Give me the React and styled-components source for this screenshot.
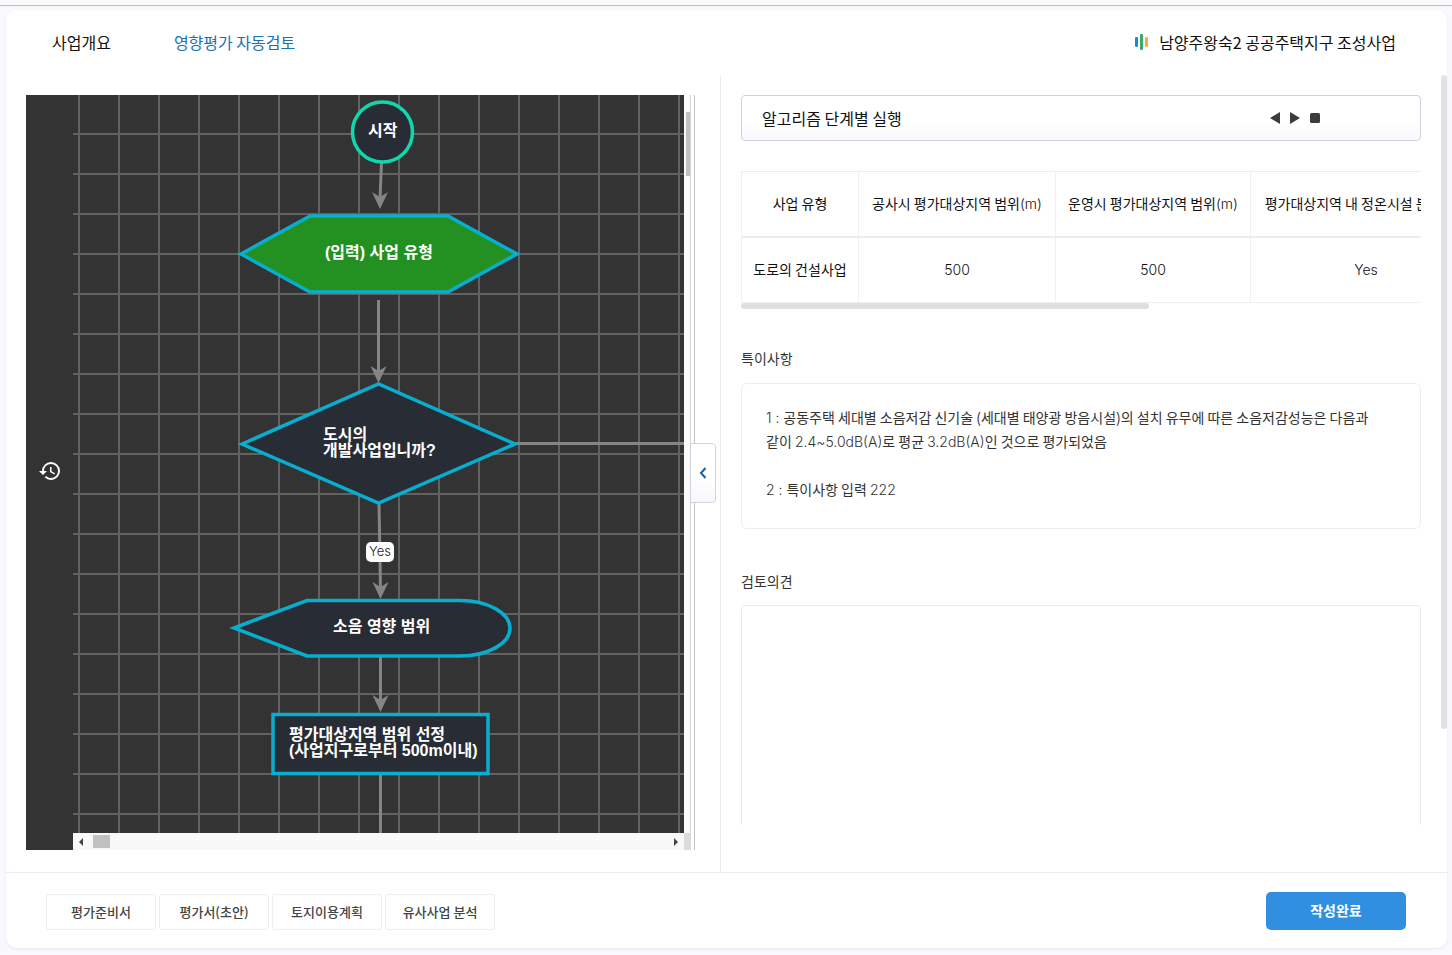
import styled, { createGlobalStyle } from 'styled-components';
import { MdHistory } from 'react-icons/md';

const GlobalStyle = createGlobalStyle`
  * {
    box-sizing: border-box;
  }

  body {
    margin: 0;
    background: #f9f9fd;
    color: #111;
    font-family: "Noto Sans CJK KR", "Noto Sans", sans-serif;
    font-size: 16px;
  }

  button {
    padding: 0;
    border: none;
    background: none;
    color: inherit;
    font-family: inherit;
    cursor: pointer;
  }
`;

const Page = styled.div`
  display: flex;
  flex-direction: column;
  height: 100vh;
  padding-bottom: 7px;
`;

const TopLine = styled.div`
  height: 6px;
  flex: none;
  background: #fafafa;
  border-bottom: 1px solid #bdbdbd;
`;

const Card = styled.div`
  display: flex;
  flex-direction: column;
  flex: 1;
  min-height: 0;
  margin: 4px 5px 0 6px;
  background: #fff;
  border-radius: 10px;
  box-shadow: 0 1px 3px #e4e4ee;
`;

const Header = styled.header`
  display: flex;
  align-items: center;
  justify-content: space-between;
  flex: none;
  height: 65px;
  padding: 0 51px 2px 46px;
`;

const Tabs = styled.nav`
  display: flex;
  gap: 63px;
`;

const Tab = styled.a`
  color: ${({ $active }) => ($active ? '#1b6fb3' : '#111')};
  text-decoration: none;
`;

const Project = styled.div`
  display: flex;
  align-items: center;
  gap: 9px;
`;

const Main = styled.main`
  display: grid;
  grid-template-columns: 715fr 726fr;
  flex: 1;
  min-height: 0;
`;

// 왼쪽 : 알고리즘 순서도
const FlowPanel = styled.section`
  position: relative;
  display: flex;
  min-width: 0;
  padding: 20px 25px 22px 20px;
  border-right: 1px solid #ebebf0;
`;

const HistoryBar = styled.div`
  display: flex;
  align-items: center;
  justify-content: center;
  flex: none;
  width: 47px;
  padding-bottom: 3px;
  background: #333;
  color: #fff;

  button {
    display: flex;
  }
`;

const Viewport = styled.div`
  display: grid;
  grid-template-columns: 1fr 11px;
  grid-template-rows: 1fr 17px;
  flex: 1;
  min-width: 0;
`;

const Canvas = styled.div`
  overflow: hidden;
  min-width: 0;
  min-height: 0;
  background: #333;

  svg {
    display: block;
    width: 100%;
    height: 100%;
  }
`;

const NodeText = styled.text`
  fill: #fff;
  font-family: "Liberation Sans", "Noto Sans CJK KR", sans-serif;
  font-size: 16px;
  font-weight: 700;
`;

const EdgeText = styled.text`
  fill: #222;
  font-family: Inter, sans-serif;
  font-size: 13px;
  font-weight: 300;
  text-anchor: middle;
`;

const VerticalTrack = styled.div`
  padding: 17px 4px 0 2px;
  border-right: 1px solid #c4c4c4;
  background: linear-gradient(to right, #fafafa 6px, #d4d4d8 6px, #d4d4d8 7px, #fff 7px);
`;

const VerticalThumb = styled.div`
  height: 64px;
  background: #c1c1c1;
`;

const HorizontalTrack = styled.div`
  display: flex;
  align-items: center;
  gap: 9px;
  padding: 0 6px;
  background: #f8f8f8;
`;

const HorizontalThumb = styled.div`
  width: 17px;
  height: 13px;
  margin-right: auto;
  background: #c1c1c1;
`;

const TrackCorner = styled.div`
  border-right: 1px solid #c4c4c4;
  background: linear-gradient(to right, #dcdcdc 7px, #fff 7px);
`;

const FoldButton = styled.button`
  position: absolute;
  top: 368px;
  right: 4px;
  display: flex;
  align-items: center;
  justify-content: center;
  width: 26px;
  height: 60px;
  border: 1px solid #d3d3e0;
  border-radius: 0 4px 4px 0;
  background: linear-gradient(#fff 60%, #f7f7fd);
`;

// 오른쪽 : 실행 결과
const ResultPanel = styled.section`
  display: grid;
  grid-template-columns: 1fr 6px;
  column-gap: 20px;
  min-width: 0;
  min-height: 0;
  padding-left: 20px;
`;

const ResultBody = styled.div`
  overflow: hidden;
  min-width: 0;
  margin: 20px 0 47px;
`;

const PanelThumb = styled.div`
  height: 82%;
  border-radius: 3px;
  background: #e1e1e8;
`;

const Runner = styled.div`
  display: flex;
  align-items: center;
  justify-content: space-between;
  height: 46px;
  padding: 0 99px 0 20px;
  border: 1px solid #d0d0de;
  border-radius: 4px;
  background: linear-gradient(#fff 60%, #f8f8fe);
  line-height: 22px;
`;

const RunnerButtons = styled.div`
  display: flex;
  gap: 8px;

  button {
    display: flex;
  }
`;

const TableWrap = styled.div`
  overflow: hidden;
  margin-top: 30px;
  border-left: 1px solid #f0f0f0;
`;

const Table = styled.table`
  width: 740px;
  border-collapse: separate;
  border-spacing: 0;
  table-layout: fixed;
  font-size: 14px;
  line-height: 20px;
  text-align: center;
  white-space: nowrap;

  th,
  td {
    height: 65px;
    padding: 0 0 2px;
    border-right: 1px solid #f0f0f0;
    border-bottom: 1px solid #f0f0f0;
    font-weight: 400;
  }

  th {
    height: 67px;
    border-top: 1px solid #ececec;
    border-bottom: 2px solid #ececec;
  }
`;

// 영문, 숫자는 얇은 글꼴
const Thin = styled.span`
  font-family: Inter, sans-serif;
  font-weight: 300;
  line-height: 1;
`;

const TableThumb = styled.div`
  width: 60%;
  height: 6px;
  border-radius: 3px;
  background: #dfdfdf;
`;

const Label = styled.label`
  display: block;
  margin-top: ${({ $top }) => $top}px;
  color: #333;
  font-size: 14px;
  line-height: 24px;
`;

const Remarks = styled.div`
  margin-top: 13px;
  padding: 21px 32px 27px 24px;
  border: 1px solid #eeeef2;
  border-radius: 6px;
  color: #333;
  font-size: 14px;
  line-height: 24px;
  word-break: keep-all;

  p {
    margin: 0;
  }

  p + p {
    margin-top: 24px;
  }
`;

const Opinion = styled.textarea`
  display: block;
  width: 100%;
  height: 300px;
  margin-top: 12px;
  padding: 20px 24px;
  border: 1px solid #ebebef;
  border-radius: 4px;
  outline: none;
  resize: none;
  font: inherit;
`;

const Footer = styled.footer`
  display: flex;
  align-items: center;
  justify-content: space-between;
  flex: none;
  height: 76px;
  padding: 0 41px 0 40px;
  border-top: 1px solid #ebebf0;
`;

const DocButtons = styled.div`
  display: flex;
  gap: 3px;
  padding-top: 2px;
`;

const DocButton = styled.button`
  width: 110px;
  height: 36px;
  border: 1px solid #eeeef0;
  border-radius: 3px;
  color: #444;
  font-size: 13px;
  font-weight: 500;
`;

const DoneButton = styled.button`
  width: 140px;
  height: 38px;
  padding-bottom: 2px;
  border-radius: 5px;
  background: #318fe1;
  color: #fff;
  font-size: 14px;
  font-weight: 700;
`;

const docs = ['평가준비서', '평가서(초안)', '토지이용계획', '유사사업 분석'];

const columns = [
  { name: '사업 유형', value: '도로의 건설사업', width: 117 },
  { name: '공사시 평가대상지역 범위', unit: '(m)', value: <Thin>500</Thin>, width: 197 },
  { name: '운영시 평가대상지역 범위', unit: '(m)', value: <Thin>500</Thin>, width: 195 },
  { name: '평가대상지역 내 정온시설 분포여부', value: <Thin>Yes</Thin>, width: 231 },
];

// 화살표 (끝점 기준)
function Arrow({ x1, y1, x2, y2 }) {
  return (
    <g>
      <line x1={x1} y1={y1} x2={x2} y2={y2 - 10} stroke="#858585" strokeWidth="3" />
      <path d={`M${x2} ${y2}l-8-17 8 5 8-5z`} fill="#858585" />
    </g>
  );
}

function FlowChart() {
  return (
    <svg>
      <defs>
        <pattern id="grid" width="40" height="40" patternUnits="userSpaceOnUse">
          <path d="M6 0V40M0 39H40" stroke="#626262" strokeWidth="2" />
        </pattern>
      </defs>
      <rect width="100%" height="100%" fill="url(#grid)" />

      <line x1="443" y1="348.5" x2="100%" y2="348.5" stroke="#858585" strokeWidth="3" />
      <line x1="307.5" y1="680" x2="307.5" y2="100%" stroke="#858585" strokeWidth="3" />
      <Arrow x1={308.5} y1={68} x2={307} y2={114} />
      <Arrow x1={305.5} y1={205} x2={305.5} y2={288} />
      <Arrow x1={306} y1={408} x2={307.5} y2={504} />
      <Arrow x1={307.5} y1={562} x2={307.5} y2={617} />

      <g fill="#282c34" stroke="#08aed0" strokeWidth="3.5">
        <circle cx="309.5" cy="37" r="30" stroke="#0fd8ac" />
        <path d="M168 159L237 121H375L444 159L375 197H237Z" fill="#229122" />
        <path d="M169 349L305.5 289L442 349L305.5 408Z" />
        <path d="M161 533L234 505.5H387A50 27.75 0 0 1 387 561H234Z" />
        <rect x="200" y="619.5" width="215" height="59" />
      </g>

      <NodeText x="295" y="41">시작</NodeText>
      <NodeText x="252" y="163">(입력) 사업 유형</NodeText>
      <NodeText x="250" y="345">도시의</NodeText>
      <NodeText x="250" y="361">개발사업입니까?</NodeText>
      <NodeText x="260" y="537">소음 영향 범위</NodeText>
      <NodeText x="216" y="645">평가대상지역 범위 선정</NodeText>
      <NodeText x="216" y="661">(사업지구로부터 500m이내)</NodeText>

      <rect x="293" y="447" width="28" height="20" rx="5" fill="#fff" />
      <EdgeText x="307" y="461">Yes</EdgeText>
    </svg>
  );
}

export default function App() {
  return (
    <>
      <GlobalStyle />
      <Page>
        <TopLine />
        <Card>
          <Header>
            <Tabs>
              <Tab href="#summary">사업개요</Tab>
              <Tab href="#review" $active>영향평가 자동검토</Tab>
            </Tabs>
            <Project>
              <svg width="16" height="16" viewBox="0 0 16 16">
                <rect x="1" y="3" width="3" height="10" rx="1" fill="#2188d0" />
                <rect x="6" y="0" width="3" height="16" rx="1" fill="#38ab68" />
                <rect x="11" y="3" width="3" height="10" rx="1" fill="#f3aa50" />
              </svg>
              <span>남양주왕숙2 공공주택지구 조성사업</span>
            </Project>
          </Header>

          <Main>
            <FlowPanel>
              <HistoryBar>
                <button type="button" aria-label="이력">
                  <MdHistory size={24} />
                </button>
              </HistoryBar>
              <Viewport>
                <Canvas>
                  <FlowChart />
                </Canvas>
                <VerticalTrack>
                  <VerticalThumb />
                </VerticalTrack>
                <HorizontalTrack>
                  <svg width="5" height="8"><path d="M4 0V8L0 4Z" fill="#444" /></svg>
                  <HorizontalThumb />
                  <svg width="5" height="8"><path d="M1 0V8L5 4Z" fill="#444" /></svg>
                </HorizontalTrack>
                <TrackCorner />
              </Viewport>
              <FoldButton type="button" aria-label="접기">
                <svg width="8" height="12" viewBox="0 0 8 12">
                  <path d="M6.5 1L2 6L6.5 11" fill="none" stroke="#1c649f" strokeWidth="2" />
                </svg>
              </FoldButton>
            </FlowPanel>

            <ResultPanel>
              <ResultBody>
                <Runner>
                  <span>알고리즘 단계별 실행</span>
                  <RunnerButtons>
                    <button type="button" aria-label="이전">
                      <svg width="12" height="12"><path d="M11 0V12L1 6Z" fill="#3c3c3c" /></svg>
                    </button>
                    <button type="button" aria-label="실행">
                      <svg width="12" height="12"><path d="M1 0V12L11 6Z" fill="#3c3c3c" /></svg>
                    </button>
                    <button type="button" aria-label="정지">
                      <svg width="12" height="12"><rect x="1" y="1" width="10" height="10" rx="1.5" fill="#3c3c3c" /></svg>
                    </button>
                  </RunnerButtons>
                </Runner>

                <TableWrap>
                  <Table>
                    <colgroup>
                      {columns.map((col) => <col key={col.name} width={col.width} />)}
                    </colgroup>
                    <thead>
                      <tr>
                        {columns.map((col) => (
                          <th key={col.name}>
                            {col.name}
                            {col.unit && <Thin>{col.unit}</Thin>}
                          </th>
                        ))}
                      </tr>
                    </thead>
                    <tbody>
                      <tr>
                        {columns.map((col) => <td key={col.name}>{col.value}</td>)}
                      </tr>
                    </tbody>
                  </Table>
                </TableWrap>
                <TableThumb />

                <Label as="div" $top={37}>특이사항</Label>
                <Remarks>
                  <p>
                    <Thin>1 : </Thin>공동주택 세대별 소음저감 신기술 (세대별 태양광 방음시설)의 설치 유무에 따른
                    소음저감성능은 다음과 같이 <Thin>2.4~5.0dB(A)</Thin>로 평균 <Thin>3.2dB(A)</Thin>인
                    것으로 평가되었음
                  </p>
                  <p><Thin>2 : </Thin>특이사항 입력 <Thin>222</Thin></p>
                </Remarks>

                <Label htmlFor="opinion" $top={40}>검토의견</Label>
                <Opinion id="opinion" />
              </ResultBody>
              <PanelThumb />
            </ResultPanel>
          </Main>

          <Footer>
            <DocButtons>
              {docs.map((doc) => <DocButton key={doc} type="button">{doc}</DocButton>)}
            </DocButtons>
            <DoneButton type="button">작성완료</DoneButton>
          </Footer>
        </Card>
      </Page>
    </>
  );
}
